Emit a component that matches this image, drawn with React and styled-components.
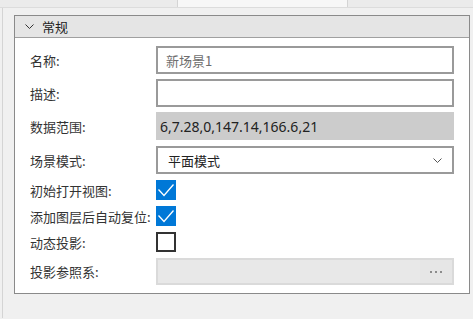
import React from 'react'
import styled, { createGlobalStyle } from 'styled-components'

const GlobalStyle = createGlobalStyle`
  html, body {
    margin: 0;
    padding: 0;
    background: #f0f0f0;
  }
  body {
    font-family: 'Noto Sans CJK SC', 'Noto Sans', sans-serif;
    font-size: 13px;
    color: #333;
  }
`

const Page = styled.div`
  width: 473px;
  height: 319px;
  overflow: hidden;
  background: #f0f0f0;
`

// Tabs strip cut off at the top
const TabStrip = styled.div`
  height: 7px;
  display: flex;
  border-bottom: 1px solid #dcdcdc;
`

const TabPart = styled.div`
  width: ${(p) => p.$w}px;
  flex: ${(p) => (p.$w ? 'none' : 1)};
  background: ${(p) => (p.$active ? '#f7f7f7' : '#ebebeb')};
  border-left: ${(p) => (p.$active ? '1px solid #d4d4d4' : 'none')};
  border-right: ${(p) => (p.$active ? '1px solid #d4d4d4' : 'none')};
`

const Panel = styled.div`
  margin-left: 2px;
  height: 303px;
  border-left: 1px solid #d4d4d4;
  padding: 7px 0 0 11px;
`

const GroupBox = styled.div`
  width: 454px;
  border: 1px solid #8a8a8a;
  background: #fff;
`

const GroupHeader = styled.div`
  height: 21px;
  display: flex;
  align-items: center;
  gap: 8px;
  padding-left: 10px;
  background: #e5e5e5;
  border-bottom: 1px solid #a0a0a0;
  font-size: 13px;
  color: #222;
`

const GroupBody = styled.div`
  padding: 8px 15px 8px 15px;
  display: flex;
  flex-direction: column;
`

const Row = styled.div`
  height: ${(p) => p.$h}px;
  display: grid;
  grid-template-columns: 126px 298px;
  align-items: start;
`

const Label = styled.div`
  height: ${(p) => p.$h}px;
  display: flex;
  align-items: center;
  white-space: nowrap;
  color: #333;
  font-size: 13px;
`

const TextBox = styled.div`
  box-sizing: border-box;
  height: 28px;
  border: 2px solid #9a9a9a;
  background: #fff;
  padding-left: 8px;
  display: flex;
  align-items: center;
  color: ${(p) => (p.$muted ? '#6e6e6e' : '#222')};
`

const ReadOnlyBox = styled.div`
  box-sizing: border-box;
  height: 28px;
  background: #cccccc;
  padding-left: 4px;
  display: flex;
  align-items: center;
  font-family: 'Noto Sans', sans-serif;
  font-size: 14px;
  color: #222;
`

const Select = styled.div`
  box-sizing: border-box;
  height: 28px;
  border: 2px solid #9a9a9a;
  background: #fff;
  padding: 0 10px 0 10px;
  display: flex;
  align-items: center;
  justify-content: space-between;
  color: #222;
`

const CheckBox = styled.div`
  box-sizing: border-box;
  width: 20px;
  height: 20px;
  background: ${(p) => (p.$checked ? '#0078d7' : '#fff')};
  border: ${(p) => (p.$checked ? 'none' : '2px solid #333')};
  display: flex;
  align-items: center;
  justify-content: center;
`

const PickerBox = styled.div`
  box-sizing: border-box;
  height: 27px;
  background: #e8e8e8;
  border: 2px solid #dadada;
  display: flex;
  justify-content: flex-end;
`

const PickerButton = styled.div`
  width: 32px;
  display: flex;
  align-items: center;
  justify-content: center;
  background: #e6e6e6;
`

const Chevron = ({ color = '#333' }) => (
  <svg width="9" height="5" viewBox="0 0 9 5">
    <polyline points="0.5,0.5 4.5,4.5 8.5,0.5" fill="none" stroke={color} strokeWidth="1" />
  </svg>
)

const Check = () => (
  <svg width="20" height="20" viewBox="0 0 20 20">
    <polyline points="2.5,9.5 8,15.5 17.5,4.5" fill="none" stroke="#fff" strokeWidth="1.3" />
  </svg>
)

const Dots = () => (
  <svg width="12" height="2" viewBox="0 0 12 2">
    <rect x="0" y="0" width="2" height="2" fill="#8c8c8c" />
    <rect x="5" y="0" width="2" height="2" fill="#8c8c8c" />
    <rect x="10" y="0" width="2" height="2" fill="#8c8c8c" />
  </svg>
)

export default function App() {
  return (
    <Page>
      <GlobalStyle />
      <TabStrip>
        <TabPart $w={177} />
        <TabPart $w={169} $active />
        <TabPart />
      </TabStrip>

      <Panel>
        <GroupBox>
          <GroupHeader>
            <Chevron />
            <span>常规</span>
          </GroupHeader>

          <GroupBody>
            <Row $h={33}>
              <Label $h={28}>名称:</Label>
              <TextBox $muted>新场景1</TextBox>
            </Row>
            <Row $h={33}>
              <Label $h={28}>描述:</Label>
              <TextBox />
            </Row>
            <Row $h={34}>
              <Label $h={28}>数据范围:</Label>
              <ReadOnlyBox>6,7.28,0,147.14,166.6,21</ReadOnlyBox>
            </Row>
            <Row $h={34}>
              <Label $h={28}>场景模式:</Label>
              <Select>
                <span>平面模式</span>
                <Chevron color="#555" />
              </Select>
            </Row>
            <Row $h={26}>
              <Label $h={20}>初始打开视图:</Label>
              <CheckBox $checked>
                <Check />
              </CheckBox>
            </Row>
            <Row $h={26}>
              <Label $h={20}>添加图层后自动复位:</Label>
              <CheckBox $checked>
                <Check />
              </CheckBox>
            </Row>
            <Row $h={26}>
              <Label $h={20}>动态投影:</Label>
              <CheckBox />
            </Row>
            <Row $h={27}>
              <Label $h={27}>投影参照系:</Label>
              <PickerBox>
                <PickerButton>
                  <Dots />
                </PickerButton>
              </PickerBox>
            </Row>
          </GroupBody>
        </GroupBox>
      </Panel>
    </Page>
  )
}
